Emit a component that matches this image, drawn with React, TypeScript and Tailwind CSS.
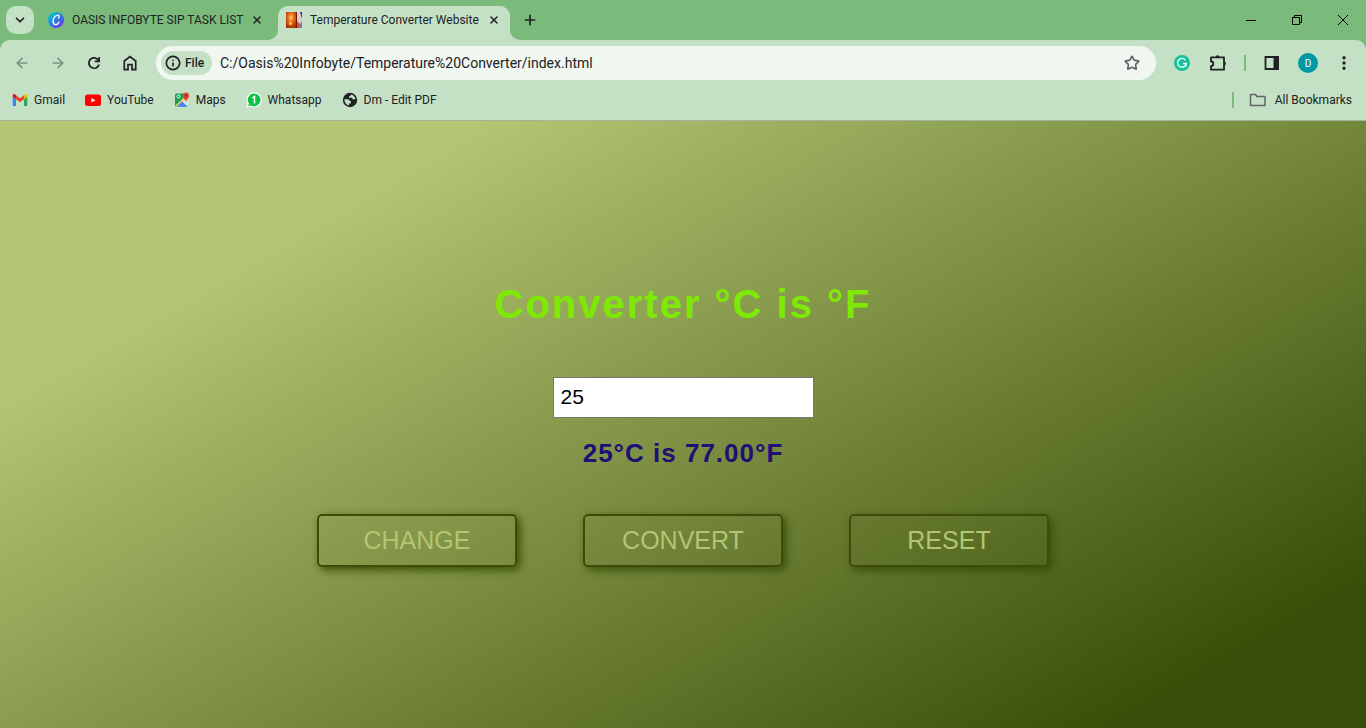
import { useState } from "react";
import type { ReactNode } from "react";
import { ArrowLeft, ArrowRight, ChevronDown, EllipsisVertical, Info, Plus, Star, X } from "lucide-react";

function IconButton({ label, className = "", children }: { label: string; className?: string; children: ReactNode }) {
  return (
    <button type="button" aria-label={label} className={"flex shrink-0 items-center justify-center " + className}>
      {children}
    </button>
  );
}

function CanvaIcon() {
  return (
    <svg className="shrink-0" width="16" height="16" viewBox="0 0 16 16" aria-hidden="true">
      <defs>
        <linearGradient id="canva" x1="0.1" y1="0.2" x2="0.8" y2="1">
          <stop offset="0" stopColor="#05c3cf" />
          <stop offset="0.5" stopColor="#2f78e0" />
          <stop offset="1" stopColor="#7a2cea" />
        </linearGradient>
      </defs>
      <circle cx="8" cy="8" r="8" fill="url(#canva)" />
      <path d="M10.6 5.900c1-1.100.5-2.900-.9-2.800C7.300 3.200 5 6.500 5.100 9.300c.1 2 1.100 3.300 2.500 3.300 1.500 0 2.700-1 3.400-2.400" fill="none" stroke="#fff" strokeWidth="1.400" strokeLinecap="round" />
    </svg>
  );
}

function FlameIcon() {
  return (
    <svg className="shrink-0" width="16" height="16" viewBox="0 0 16 16" aria-hidden="true">
      <defs>
        <radialGradient id="flame" cx="0.5" cy="0.35" r="0.65">
          <stop offset="0" stopColor="#ffe09a" />
          <stop offset="0.3" stopColor="#f58220" />
          <stop offset="1" stopColor="#a83204" />
        </radialGradient>
      </defs>
      <path d="M0 0h10v16H0z" fill="url(#flame)" />
      <path d="M10 0h6v16h-6z" fill="#d9d0d8" />
      <path d="M10 0h1v16h-1z" fill="#6b1c10" />
      <path d="M11 9l3 3v4h-3z" fill="#e0521b" />
      <path d="M11 1h2v7h-2z" fill="#efc7a8" />
      <path d="M14 0h2v7z" fill="#2b2fae" />
      <path d="M14 12l2-3v7h-2z" fill="#8a78b8" />
      <circle cx="4.500" cy="11.500" r="1.500" fill="#ffc766" />
    </svg>
  );
}

function GmailIcon() {
  return (
    <svg width="16" height="16" viewBox="0 0 24 24" aria-hidden="true">
      <path d="M1 7v12.500C1 20.400 1.700 21 2.500 21H6V11z" fill="#4285f4" />
      <path d="M23 7v12.500c0 .9-.7 1.500-1.500 1.500H18V11z" fill="#34a853" />
      <path d="M18 5.500V11l5-3.800V5.500c0-2-2.200-3.100-3.800-1.900z" fill="#fbbc04" />
      <path d="M6 11V5l6 4.500L18 5v6l-6 4.500z" fill="#ea4335" />
      <path d="M1 5.500v1.700L6 11V5L4.800 3.600C3.200 2.400 1 3.500 1 5.500z" fill="#c5221f" />
    </svg>
  );
}

function YouTubeIcon() {
  return (
    <svg width="16" height="16" viewBox="0 0 16 16" aria-hidden="true">
      <rect y="2.500" width="16" height="11.500" rx="2.500" fill="#f00" />
      <path d="M6.400 5.900v4.700l4.100-2.350z" fill="#fff" />
    </svg>
  );
}

function MapsIcon() {
  return (
    <svg width="16" height="16" viewBox="0 0 16 16" aria-hidden="true">
      <path d="M2.500 1.500h10v13h-10a1.500 1.500 0 0 1-1.500-1.500V3a1.500 1.500 0 0 1 1.500-1.500z" fill="#1e9d59" />
      <path d="M1.500 14.200L12 4l2 2v7z" fill="#dfe5e8" />
      <path d="M1.600 13.600L11 4.200l1.500 1.500L3 14.800z" fill="#fdd44b" />
      <path d="M8 9.300l5.500 5.500h-11z" fill="#4285f4" />
      <path d="M12 10.500C12 8 8.900 6.600 8.900 3.500a3.100 3.100 0 0 1 6.200 0C15.100 6.600 12 8 12 10.500z" fill="#ea4335" />
      <circle cx="12" cy="3.600" r="1.100" fill="#7b1d16" />
      <circle cx="4.500" cy="4.500" r="1.500" fill="none" stroke="#fff" strokeWidth="0.900" />
    </svg>
  );
}

function WhatsappIcon() {
  return (
    <svg width="16" height="16" viewBox="0 0 16 16" aria-hidden="true">
      <path d="M8.200.3A7.600 7.600 0 1 1 4.600 14.600L.5 15.800l1.200-4A7.600 7.600 0 0 1 8.200.3z" fill="#fff" />
      <path d="M8.200 1.500a6.400 6.400 0 1 1-3.300 11.900l-2.700.8.8-2.600A6.400 6.400 0 0 1 8.200 1.500z" fill="#0cc143" />
      <path d="M6.300 5.900L8.500 4.700v6.800" fill="none" stroke="#fff" strokeWidth="1.600" />
    </svg>
  );
}

function GlobeIcon() {
  return (
    <svg width="16" height="16" viewBox="0 0 16 16" aria-hidden="true">
      <circle cx="8" cy="8" r="7.200" fill="#202124" />
      <path d="M2.400 7.300h3.300c1.200 0 1.900.8 1.900 1.800h1.200v2.300H7v2.100c-2.800-.6-4.700-3-4.600-6.200zM9 2.600c-.2 1.200-.9 1.600-2 1.700v1.500h2.200c.8 0 1.200.5 1.300 1.400h3c-.3-2.200-2-4.200-4.500-4.600z" fill="#c4e1c5" />
    </svg>
  );
}

const bookmarks = [
  { name: "Gmail", icon: <GmailIcon /> },
  { name: "YouTube", icon: <YouTubeIcon /> },
  { name: "Maps", icon: <MapsIcon /> },
  { name: "Whatsapp", icon: <WhatsappIcon /> },
  { name: "Dm - Edit PDF", icon: <GlobeIcon /> },
];

function TabStrip() {
  return (
    <div className="flex h-10 bg-[#7abb7c] pl-[6px]">
      <IconButton label="Search tabs" className="mt-[6px] h-7 w-7 rounded-[10px] bg-[#c4e1c5]">
        <ChevronDown size={14} strokeWidth={3} />
      </IconButton>
      <div className="flex h-10 w-[244px] items-center gap-2 pl-[14px] pr-4">
        <CanvaIcon />
        <span className="flex-1 whitespace-nowrap text-xs">OASIS INFOBYTE SIP TASK LIST</span>
        <IconButton label="Close tab"><X size={12} strokeWidth={3} /></IconButton>
      </div>
      <div className="relative mt-[6px] flex h-[34px] w-[232px] items-center gap-2 rounded-t-[10px] bg-[#c4e1c5] pb-[6px] pl-2 pr-[10px]">
        <svg className="absolute -left-[10px] bottom-0" width="10" height="10" aria-hidden="true"><path d="M10 0v10H0A10 10 0 0 0 10 0z" fill="#c4e1c5" /></svg>
        <svg className="absolute -right-[10px] bottom-0" width="10" height="10" aria-hidden="true"><path d="M0 0v10h10A10 10 0 0 1 0 0z" fill="#c4e1c5" /></svg>
        <FlameIcon />
        <span className="flex-1 whitespace-nowrap text-xs">Temperature Converter Website</span>
        <IconButton label="Close tab"><X size={12} strokeWidth={3} /></IconButton>
      </div>
      <IconButton label="New tab" className="w-10"><Plus size={16} strokeWidth={2.500} /></IconButton>
      <div className="ml-auto flex text-black">
        <IconButton label="Minimize" className="w-[46px]">
          <svg width="10" height="10" shapeRendering="crispEdges"><path d="M0 5h10v1H0z" /></svg>
        </IconButton>
        <IconButton label="Restore" className="w-[46px]">
          <svg width="10" height="10" fill="none" stroke="currentColor"><path d="M.5 2.500h7v7h-7zM2.500 2.500v-2h7v7h-2" /></svg>
        </IconButton>
        <IconButton label="Close" className="w-[46px]">
          <svg width="10" height="10" fill="none" stroke="currentColor"><path d="M0 0l10 10M10 0L0 10" /></svg>
        </IconButton>
      </div>
    </div>
  );
}

function Toolbar() {
  return (
    <div className="bg-[#7abb7c]">
      <div className="flex h-[46px] items-center rounded-t-[10px] bg-[#c4e1c5] pl-1">
        <IconButton label="Back" className="w-9 text-[#7d927e]"><ArrowLeft size={16} strokeWidth={2.500} /></IconButton>
        <IconButton label="Forward" className="w-9 text-[#7d927e]"><ArrowRight size={16} strokeWidth={2.500} /></IconButton>
        <IconButton label="Reload" className="w-9">
          <svg width="18" height="18" viewBox="0 0 24 24" fill="currentColor"><path d="M12 20a8 8 0 1 1 5.800-13.500V4H20v7h-7V8.700h3.600A5.700 5.700 0 1 0 17.500 14h2.300A8 8 0 0 1 12 20z" /></svg>
        </IconButton>
        <IconButton label="Home" className="w-9">
          <svg width="18" height="18" viewBox="0 0 18 18" fill="none" stroke="currentColor" strokeWidth="1.700"><path d="M3.300 7L9 2.500 14.700 7v8.700H11v-5H7v5H3.300z" /></svg>
        </IconButton>
        <div className="ml-2 flex h-[34px] flex-1 items-center rounded-full bg-[#f0f7f1] pl-[5px] pr-4">
          <button type="button" className="flex h-6 w-[51px] items-center gap-1 rounded-full bg-[#c4e1c5] pl-1 text-xs font-medium">
            <Info size={16} strokeWidth={2.500} />
            File
          </button>
          <input aria-label="Address" defaultValue="C:/Oasis%20Infobyte/Temperature%20Converter/index.html" className="min-w-0 flex-1 bg-transparent pl-2 text-sm outline-none" />
          <IconButton label="Bookmark this page" className="text-[#5f6368]">
            <Star size={16} strokeWidth={2.500} strokeLinejoin="miter" />
          </IconButton>
        </div>
        <div className="flex items-center pl-2 pr-1">
          <IconButton label="Grammarly" className="w-9">
            <svg width="16" height="16" viewBox="0 0 16 16"><circle cx="8" cy="8" r="8" fill="#15c39a" /><path d="M11.300 5A4.400 4.400 0 1 0 12.300 8.500H9M12.300 8.500l-.6 2.800" fill="none" stroke="#fff" strokeWidth="1.300" /></svg>
          </IconButton>
          <IconButton label="Extensions" className="w-9">
            <svg width="18" height="18" viewBox="0 0 18 18" aria-hidden="true">
              <path d="M2 3.300h13v12.400H2v-3.600a2.200 2.200 0 0 0 0-4.600z" fill="none" stroke="currentColor" strokeWidth="1.800" strokeLinejoin="round" />
              <path d="M6.700 3.200a1.900 1.900 0 0 1 3.800 0zM15 7.500a1.900 1.900 0 0 1 0 3.900z" fill="currentColor" />
            </svg>
          </IconButton>
          <span className="mx-2 h-4 w-[2px] bg-[#7abb7c]" />
          <IconButton label="Side panel" className="w-9">
            <svg width="16" height="16" viewBox="0 0 16 16"><path d="M1.500 2h12.500v12H1.500z" fill="none" stroke="currentColor" strokeWidth="1.800" /><path d="M9.500 1.500H15v13H9.500z" fill="currentColor" /></svg>
          </IconButton>
          <IconButton label="Profile" className="w-9">
            <span className="flex h-5 w-5 items-center justify-center rounded-full bg-[#0097a7] text-[10px] text-white">D</span>
          </IconButton>
          <IconButton label="Menu" className="w-9"><EllipsisVertical size={18} strokeWidth={2.500} /></IconButton>
        </div>
      </div>
    </div>
  );
}

function BookmarksBar() {
  return (
    <nav aria-label="Bookmarks" className="flex h-[35px] items-center border-b border-[#9fb59f] bg-[#c4e1c5] pb-[6px] pl-3 pr-[14px] text-xs">
      <div className="flex gap-5">
        {bookmarks.map((b) => (
          <a key={b.name} href="#" className="flex items-center gap-[6px] whitespace-nowrap">
            {b.icon}
            {b.name}
          </a>
        ))}
      </div>
      <span className="ml-auto h-4 w-[2px] bg-[#7abb7c]" />
      <a href="#" className="ml-[15px] flex items-center gap-2">
        <svg width="18" height="14" viewBox="0 0 18 14" fill="none" stroke="#5f6368" strokeWidth="1.500" aria-hidden="true"><path d="M1.500 1.500h5l1.500 2h8v9h-14.500z" strokeLinejoin="round" /></svg>
        All Bookmarks
      </a>
    </nav>
  );
}

const actionStyle =
  "h-[53px] w-[200px] rounded-[5px] border-2 border-[#3b4d07] pt-[2px] text-[25px] text-[#b4c573] shadow-[3px_3px_8px_#384d07]";

export default function App() {
  const [value, setValue] = useState("25");
  const [toF, setToF] = useState(true);
  const [result, setResult] = useState("25°C is 77.00°F");

  const convert = () => {
    const n = Number(value);
    setResult(
      toF ? `${value}°C is ${((n * 9) / 5 + 32).toFixed(2)}°F` : `${value}°F is ${(((n - 32) * 5) / 9).toFixed(2)}°C`,
    );
  };
  const reset = () => {
    setValue("");
    setResult("");
  };

  return (
    <div className="flex min-h-screen flex-col text-[#202124]">
      <header className="font-[Roboto,sans-serif]">
        <TabStrip />
        <Toolbar />
        <BookmarksBar />
      </header>
      <main className="flex flex-1 flex-col items-center justify-center bg-[linear-gradient(150deg,#b4c573_20%,#384d07_90%)] pb-[2px] font-['Liberation_Sans',Arial,sans-serif]">
        <h1 className="text-[40px] font-bold leading-[46px] tracking-[2px] text-[#7fe906]">
          {toF ? "Converter °C is °F" : "Converter °F is °C"}
        </h1>
        <input
          aria-label="Temperature"
          value={value}
          onChange={(e) => setValue(e.target.value)}
          className="mt-[50px] h-[41px] w-[261px] border border-[#767676] bg-white px-[7px] text-[21px] text-black outline-none"
        />
        <p className="mt-5 h-[30px] text-[26px] font-bold leading-[30px] tracking-[1px] text-[#200f75]">{result}</p>
        <div className="mt-[46px] flex gap-[66px]">
          <button type="button" className={actionStyle} onClick={() => setToF(!toF)}>CHANGE</button>
          <button type="button" className={actionStyle} onClick={convert}>CONVERT</button>
          <button type="button" className={actionStyle} onClick={reset}>RESET</button>
        </div>
      </main>
    </div>
  );
}
